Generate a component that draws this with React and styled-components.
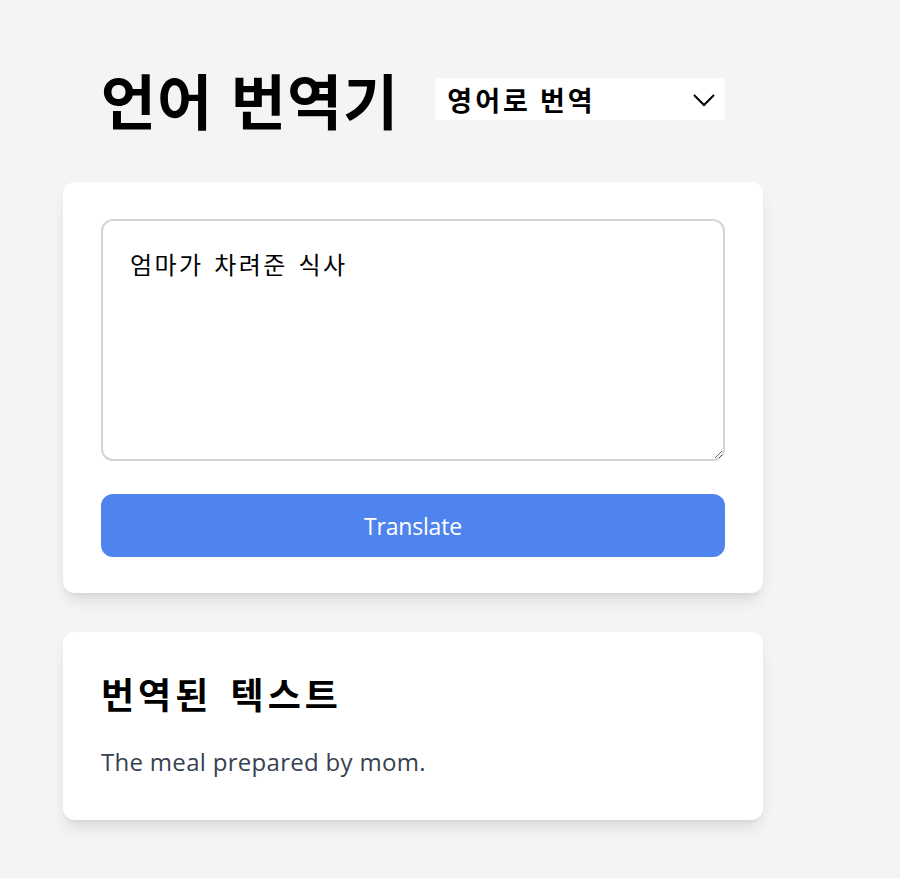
import React, { useState } from 'react';
import styled, { createGlobalStyle } from 'styled-components';

const GlobalStyle = createGlobalStyle`
  html, body {
    margin: 0;
    padding: 0;
    background: #f3f4f6;
    font-family: "Noto Sans CJK KR", "Noto Sans", sans-serif;
  }
`;

const Page = styled.div`
  width: 700px;
  margin-left: 63px;
  padding-top: 55px;
`;

const Header = styled.div`
  display: flex;
  align-items: center;
  justify-content: center;
  gap: 36px;
  height: 88px;
  margin-bottom: 39px;
`;

const Title = styled.h1`
  margin: 0;
  font-size: 60px;
  font-weight: 700;
  line-height: 1;
  letter-spacing: 1px;
  word-spacing: 3px;
  color: #000;
`;

const SelectWrap = styled.div`
  position: relative;
  width: 290px;
  height: 42px;
`;

const Select = styled.select`
  appearance: none;
  width: 100%;
  height: 100%;
  border: none;
  background: #fff;
  padding: 0 12px;
  font-family: inherit;
  font-size: 27px;
  font-weight: 700;
  letter-spacing: 3px;
  color: #000;
  outline: none;
`;

const Chevron = styled.svg`
  position: absolute;
  right: 10px;
  top: 11px;
  pointer-events: none;
`;

const Card = styled.div`
  background: #fff;
  border-radius: 12px;
  box-shadow: 0 10px 15px -3px rgba(0, 0, 0, 0.1), 0 4px 6px -4px rgba(0, 0, 0, 0.1);
  padding: ${p => p.$pad};
  margin-bottom: 39px;
`;

const TextArea = styled.textarea`
  display: block;
  box-sizing: border-box;
  width: 100%;
  height: 242px;
  border: 2px solid #d1d5db;
  border-radius: 12px;
  padding: 26px 27px;
  font-family: inherit;
  font-size: 24px;
  line-height: 1.4;
  letter-spacing: 2.4px;
  word-spacing: 3px;
  color: #000;
  outline: none;
`;

const Button = styled.button`
  display: block;
  width: 100%;
  height: 63px;
  margin-top: 33px;
  border: none;
  border-radius: 12px;
  background: #4f83ee;
  color: #fff;
  font-family: "Open Sans", sans-serif;
  font-size: 23px;
  letter-spacing: -0.2px;
  cursor: pointer;
`;

const ResultTitle = styled.h2`
  margin: 0 0 28px;
  font-size: 36px;
  font-weight: 700;
  line-height: 1.3;
  letter-spacing: 4px;
  word-spacing: 6px;
  color: #000;
`;

const ResultText = styled.p`
  margin: 0;
  font-family: "Open Sans", sans-serif;
  font-size: 24px;
  line-height: 1.45;
  letter-spacing: 0.3px;
  color: #374151;
`;

export default function App() {
  const [lang, setLang] = useState('en');
  const [text, setText] = useState('엄마가 차려준 식사');

  return (
    <>
      <GlobalStyle />
      <Page>
        <Header>
          <Title>언어 번역기</Title>
          <SelectWrap>
            <Select value={lang} onChange={e => setLang(e.target.value)}>
              <option value="en">영어로 번역</option>
              <option value="ko">한국어로 번역</option>
            </Select>
            <Chevron width="22" height="20" viewBox="0 0 22 20" fill="none">
              <path d="M1 6 L11 16 L21 6" stroke="#000" strokeWidth="2" />
            </Chevron>
          </SelectWrap>
        </Header>
        <Card $pad="37px 38px 36px">
          <TextArea value={text} onChange={e => setText(e.target.value)} />
          <Button type="button">Translate</Button>
        </Card>
        <Card $pad="38px 38px 40px">
          <ResultTitle>번역된 텍스트</ResultTitle>
          <ResultText>The meal prepared by mom.</ResultText>
        </Card>
      </Page>
    </>
  );
}
